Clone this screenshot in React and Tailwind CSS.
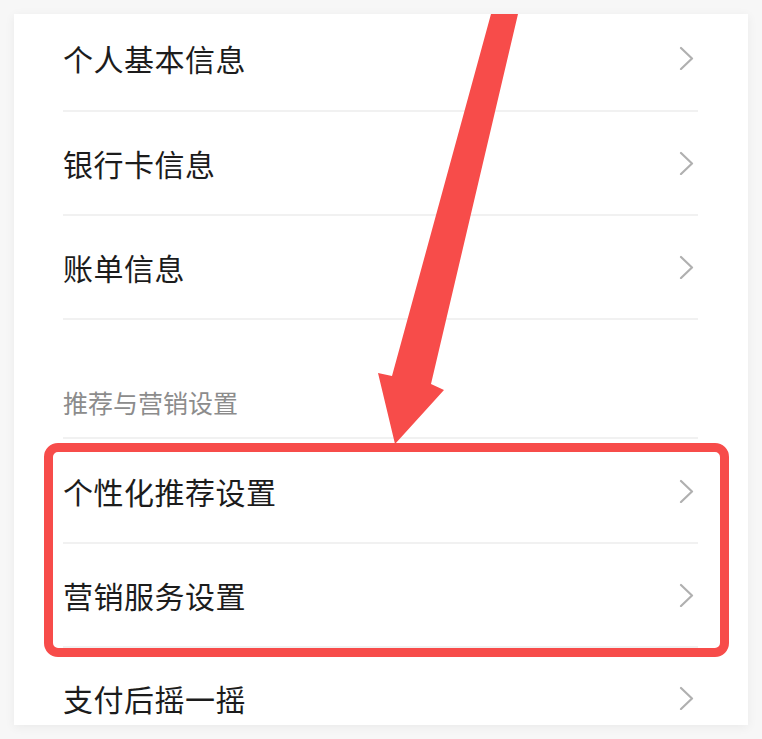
import React from "react";

const font = { fontFamily: '"Noto Sans CJK SC", "Noto Sans", sans-serif' };

function Chevron() {
  return (
    <svg width="16" height="24" viewBox="0 0 16 24" className="shrink-0">
      <polyline points="2,2 13,12.5 2,23" fill="none" stroke="#b0b0b0" strokeWidth="2.2" strokeLinecap="round" strokeLinejoin="round" />
    </svg>
  );
}

function Row({ label, h, divider = true }) {
  return (
    <div className="flex flex-col">
      <div className={`flex items-center justify-between pr-[3px] ${h}`}>
        <span className="text-[30px] leading-none text-[#1c1c1c] tracking-[0.5px]">{label}</span>
        <Chevron />
      </div>
      {divider && <div className="h-[2px] bg-[#f1f1f1]" />}
    </div>
  );
}

export default function App() {
  return (
    <div className="relative w-[762px] h-[739px] bg-[#f7f7f7] overflow-hidden" style={font}>
      <div className="absolute left-[14px] top-[14px] w-[734px] h-[711px] bg-white shadow-[0_2px_10px_rgba(0,0,0,0.06)] overflow-hidden">
        <div className="flex flex-col pl-[49px] pr-[50px]">
          <Row label="个人基本信息" h="h-[96px] pb-[8px]" />
          <Row label="银行卡信息" h="h-[102px]" />
          <Row label="账单信息" h="h-[102px]" />
          <div className="flex flex-col">
            <div className="h-[117px] flex items-end pb-[22px]">
              <span className="text-[25px] leading-none text-[#8c8c8c]">推荐与营销设置</span>
            </div>
            <div className="h-[2px] bg-[#f1f1f1]" />
          </div>
          <Row label="个性化推荐设置" h="h-[103px]" />
          <Row label="营销服务设置" h="h-[102px]" />
          <Row label="支付后摇一摇" h="h-[100px]" divider={false} />
        </div>
      </div>
      <div className="absolute left-[44px] top-[443px] w-[685px] h-[214px] border-[9px] border-[#f74c4a] rounded-[14px]" />
      <svg className="absolute left-0 top-0 pointer-events-none" width="762" height="739" viewBox="0 0 762 739">
        <polygon points="491,14 518,14 431,384 444,390 395,444 378,373 392,376" fill="#f74c4a" />
      </svg>
    </div>
  );
}
